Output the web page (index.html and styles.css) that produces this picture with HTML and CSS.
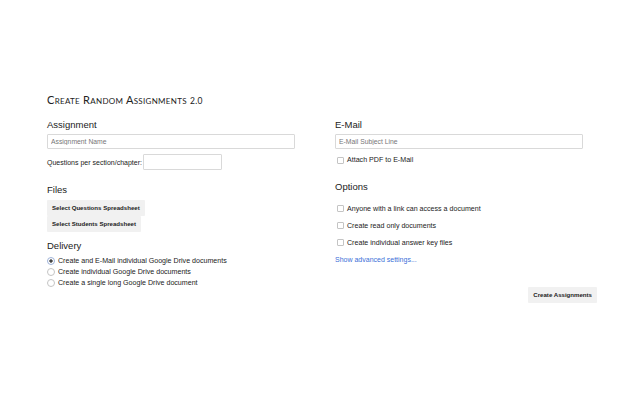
FILE: index.html
```html
<!DOCTYPE html>
<html lang="en">
<head>
<meta charset="UTF-8">
<meta name="viewport" content="width=device-width, initial-scale=1.0">
<title>Create Random Assignments 2.0</title>
<link rel="stylesheet" href="styles.css">
</head>
<body>
<main class="page">
    <h1 class="app-title">Create Random Assignments <span class="version">2.0</span></h1>

    <div class="columns">
        <div class="col">
            <h2 class="section-title">Assignment</h2>
            <input class="text-input wide" type="text" placeholder="Assignment Name">
            <div class="field-row">
                <label class="field-label">Questions per section/chapter:</label>
                <input class="text-input short" type="text">
            </div>

            <h2 class="section-title files-title">Files</h2>
            <div class="file-buttons">
                <a href="#" class="gray-btn">Select Questions Spreadsheet</a>
                <a href="#" class="gray-btn">Select Students Spreadsheet</a>
            </div>

            <h2 class="section-title delivery-title">Delivery</h2>
            <div class="radio-list">
                <label class="choice"><input type="radio" name="delivery" checked> Create and E-Mail individual Google Drive documents</label>
                <label class="choice"><input type="radio" name="delivery"> Create individual Google Drive documents</label>
                <label class="choice"><input type="radio" name="delivery"> Create a single long Google Drive document</label>
            </div>
        </div>

        <div class="col">
            <h2 class="section-title">E-Mail</h2>
            <input class="text-input wide" type="text" placeholder="E-Mail Subject Line">
            <label class="choice attach"><input type="checkbox"> Attach PDF to E-Mail</label>

            <h2 class="section-title options-title">Options</h2>
            <div class="option-list">
                <label class="choice option"><input type="checkbox"> Anyone with a link can access a document</label>
                <label class="choice option"><input type="checkbox"> Create read only documents</label>
                <label class="choice option"><input type="checkbox"> Create individual answer key files</label>
                <a href="#" class="advanced-link">Show advanced settings...</a>
            </div>

            <div class="submit-row">
                <a href="#" class="gray-btn">Create Assignments</a>
            </div>
        </div>
    </div>
</main>
</body>
</html>
```

FILE: styles.css
```css
body {
    margin: 0;
    padding: 0;
    background-color: #fff;
    font-family: "Liberation Sans", Arial, sans-serif;
    color: #222;
}

.page {
    width: 550px;
    margin-left: 47px;
    padding-top: 94px;
}

.app-title {
    margin: 0;
    height: 12px;
    font-family: Lato, "Liberation Sans", sans-serif;
    font-variant: small-caps;
    font-weight: normal;
    font-size: 11px;
    line-height: 12px;
    letter-spacing: 0.3px;
    color: #222;
}

.version {
    font-size: 8.5px;
    line-height: 0;
}

.columns {
    display: grid;
    grid-template-columns: 262px 262px;
    column-gap: 26px;
    margin-top: 13px;
}

.section-title {
    margin: 0;
    font-size: 9.5px;
    line-height: 12px;
    font-weight: normal;
    color: #222;
}

.text-input {
    box-sizing: border-box;
    display: block;
    margin: 0;
    padding: 0 3px;
    border: 1px solid #d9d9d9;
    border-radius: 1px;
    font-family: "Liberation Sans", Arial, sans-serif;
    font-size: 6.8px;
    color: #333;
    outline: none;
}

.text-input::placeholder {
    color: #777;
}

.wide {
    width: 248px;
    height: 15px;
    margin-top: 3px;
}

.field-row {
    display: flex;
    align-items: center;
    margin-top: 5px;
}

.field-label {
    font-size: 7px;
    color: #222;
}

.short {
    width: 79px;
    height: 16px;
    margin-left: 1px;
}

.files-title {
    margin-top: 14px;
}

.file-buttons {
    display: flex;
    flex-direction: column;
    align-items: flex-start;
    margin-top: 4px;
}

.gray-btn {
    display: inline-block;
    box-sizing: border-box;
    height: 16px;
    line-height: 16px;
    padding: 0 5px;
    background: #f1f1f1;
    border-radius: 1px;
    font-size: 6.1px;
    font-weight: bold;
    color: #222;
    text-decoration: none;
}

.delivery-title {
    margin-top: 8px;
}

.radio-list {
    margin-top: 3px;
}

.choice {
    display: flex;
    align-items: center;
    height: 11px;
    font-size: 7.1px;
    color: #222;
}

.choice input {
    appearance: none;
    -webkit-appearance: none;
    box-sizing: border-box;
    margin: 0 3px 0 0;
    border: 1px solid #c4c4c4;
    background: #fff;
    flex: none;
}

.choice input[type="radio"] {
    width: 8px;
    height: 8px;
    border-radius: 50%;
}

.choice input[type="radio"]:checked {
    border-color: #9fb3d9;
    background: radial-gradient(circle, #444 0, #444 1.4px, #fff 1.9px);
}

.choice input[type="checkbox"] {
    width: 7px;
    height: 7px;
    margin-left: 2px;
    margin-right: 3px;
    border-radius: 1px;
}

.attach {
    height: 12px;
    margin-top: 5px;
}

.options-title {
    margin-top: 15px;
}

.option-list {
    margin-top: 7px;
}

.option {
    height: 17px;
}

.advanced-link {
    display: block;
    height: 17px;
    line-height: 17px;
    font-size: 7px;
    color: #3b6fd8;
    text-decoration: none;
}

.submit-row {
    display: flex;
    justify-content: flex-end;
    margin-top: 19px;
}
```
